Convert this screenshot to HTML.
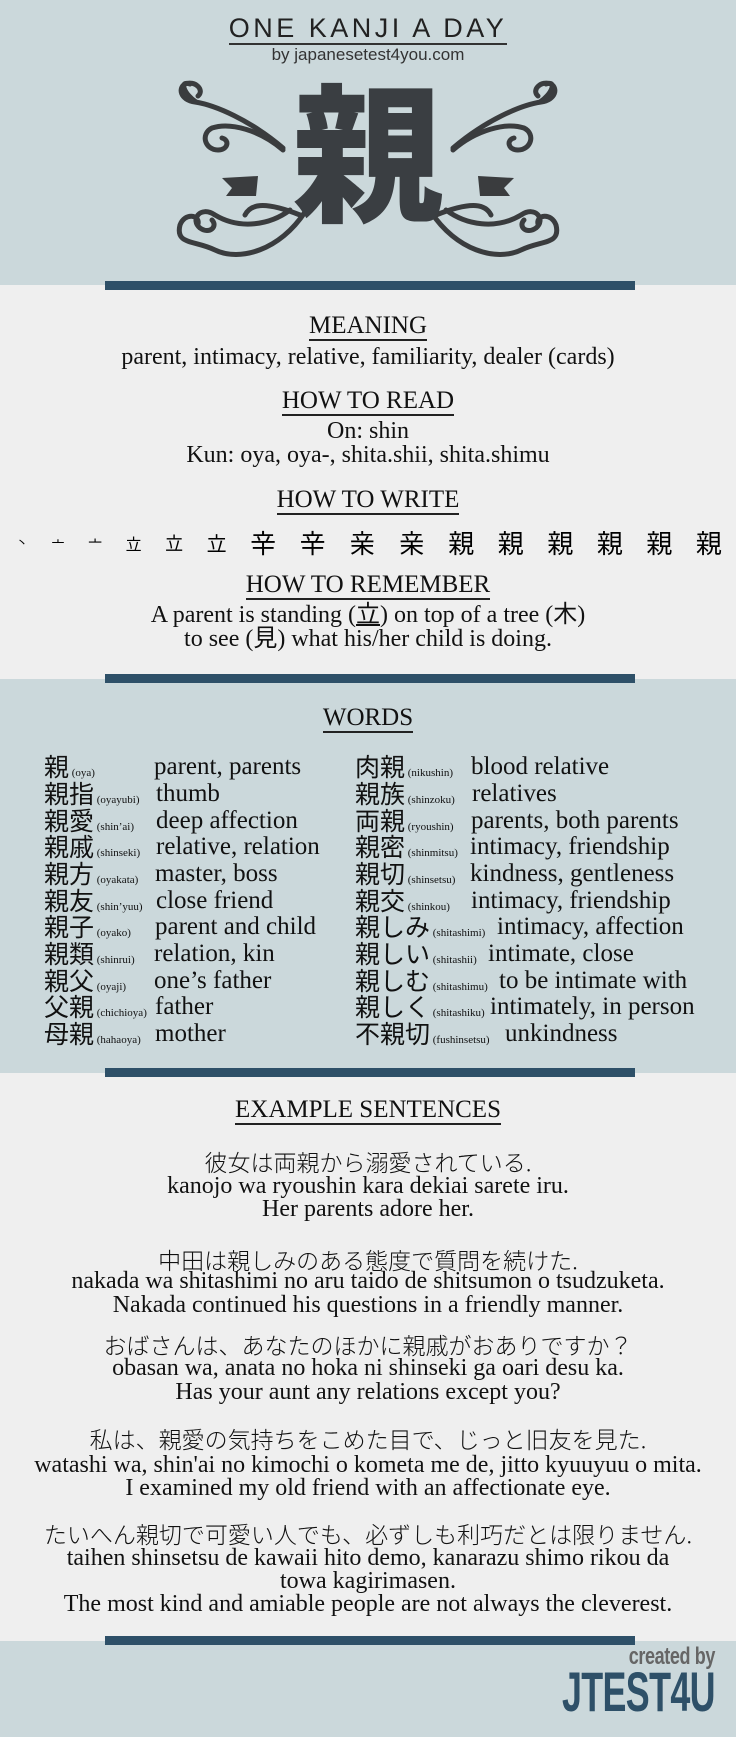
<!DOCTYPE html>
<html><head><meta charset="utf-8"><style>
*{margin:0;padding:0;box-sizing:border-box}
body{width:736px;height:1737px;position:relative;background:#efefef;font-family:"Liberation Serif","Noto Sans CJK JP",serif;color:#111;overflow:hidden}
.band{position:absolute;left:0;width:736px;background:#cbd8db}
.bar{position:absolute;left:105px;width:530px;height:9px;background:#2e5068}
.c{position:absolute;left:0;width:736px;text-align:center;white-space:nowrap}
.h{font-size:25px;line-height:28px}
.h span{border-bottom:2px solid #222}
.t{font-size:24px;line-height:26px}
.jp{font-family:"Noto Sans CJK JP",sans-serif;font-weight:300;font-size:23px;line-height:26px}
.row{position:absolute;font-size:22px;line-height:27px;white-space:nowrap}
.k{font-family:"Noto Sans CJK JP",sans-serif;font-size:25px;font-weight:400}
.r{font-size:11px}
.m{position:absolute;white-space:nowrap;font-size:25px;line-height:27px}
</style></head><body>
<div class="band" style="top:0;height:285px"></div>
<div class="c" style="top:13px;font-family:'Liberation Sans',sans-serif;font-size:27px;letter-spacing:3.5px;color:#222"><span style="border-bottom:2px solid #333">ONE KANJI A DAY</span></div>
<div class="c" style="top:45px;font-family:'Liberation Sans',sans-serif;font-size:17px;color:#333">by japanesetest4you.com</div>
<svg style="position:absolute;left:0;top:0" width="736" height="285" viewBox="0 0 736 285">
<g fill="none" stroke="#3a3c3e" stroke-width="5" stroke-linecap="round">
<g id="L">
<path d="M283 148 C250 120 215 105 195 102 C180 100 178 88 185 84 C195 80 205 90 198 96"/>
<path d="M196 102 C185 95 178 80 190 84"/>
<path d="M283 150 C260 130 230 122 212 128 C200 134 205 150 218 150 C228 150 230 140 222 138"/>
<path d="M290 210 C270 225 240 230 215 215 C200 205 190 220 200 228 C210 235 218 226 212 220"/>
<path d="M305 212 C280 250 240 262 215 250 C195 240 175 245 180 225 C185 212 200 215 198 224"/>
<path d="M300 215 C262 200 250 205 245 215"/>
</g>
<use href="#L" transform="translate(736 0) scale(-1 1)"/>
</g>
<g fill="#3a3c3e">
<path d="M222 178 L258 176 L256 196 L226 196 L232 188 Z"/>
<path d="M514 178 L478 176 L480 196 L510 196 L504 188 Z"/>
</g>
</svg>
<div style="position:absolute;left:0;width:736px;top:66px;text-align:center;font-family:'Noto Sans CJK JP',sans-serif;font-weight:900;font-size:150px;line-height:160px;color:#3a3e42">親</div>
<div class="bar" style="top:281px"></div>

<div class="c h" style="top:312px"><span>MEANING</span></div>
<div class="c t" style="top:344px">parent, intimacy, relative, familiarity, dealer (cards)</div>
<div class="c h" style="top:387px"><span>HOW TO READ</span></div>
<div class="c t" style="top:418px">On: shin</div>
<div class="c t" style="top:442px">Kun: oya, oya-, shita.shii, shita.shimu</div>
<div class="c h" style="top:486px"><span>HOW TO WRITE</span></div>
<div style="position:absolute;top:526px;left:16px;width:706px;display:flex;justify-content:space-between;align-items:flex-end;font-family:'Noto Sans CJK JP',sans-serif;font-size:26px;line-height:34px;color:#000">
<span style="font-size:12px">丶</span><span style="font-size:13px">亠</span><span style="font-size:14px">亠</span><span style="font-size:16px">立</span><span style="font-size:18px">立</span><span style="font-size:20px">立</span><span>辛</span><span>辛</span><span>亲</span><span>亲</span><span>親</span><span>親</span><span>親</span><span>親</span><span>親</span><span>親</span></div>
<div class="c h" style="top:571px"><span>HOW TO REMEMBER</span></div>
<div class="c t" style="top:602px">A parent is standing (<u>立</u>) on top of a tree (木)</div>
<div class="c t" style="top:626px">to see (見) what his/her child is doing.</div>
<div class="band" style="top:679px;height:394px"></div>
<div class="bar" style="top:674px"></div>

<div class="c h" style="top:704px"><span>WORDS</span></div>
<div style="position:absolute;top:753px;left:0;width:736px">
<div class="row" style="left:44px;top:0"><span class="k">親</span><span class="r"> (oya)</span></div><div class="m" style="left:154px;top:0">parent, parents</div>
<div class="row" style="left:44px;top:27px"><span class="k">親指</span><span class="r"> (oyayubi)</span></div><div class="m" style="left:156px;top:27px">thumb</div>
<div class="row" style="left:44px;top:54px"><span class="k">親愛</span><span class="r"> (shin’ai)</span></div><div class="m" style="left:156px;top:54px">deep affection</div>
<div class="row" style="left:44px;top:80px"><span class="k">親戚</span><span class="r"> (shinseki)</span></div><div class="m" style="left:156px;top:80px">relative, relation</div>
<div class="row" style="left:44px;top:107px"><span class="k">親方</span><span class="r"> (oyakata)</span></div><div class="m" style="left:155px;top:107px">master, boss</div>
<div class="row" style="left:44px;top:134px"><span class="k">親友</span><span class="r"> (shin’yuu)</span></div><div class="m" style="left:156px;top:134px">close friend</div>
<div class="row" style="left:44px;top:160px"><span class="k">親子</span><span class="r"> (oyako)</span></div><div class="m" style="left:155px;top:160px">parent and child</div>
<div class="row" style="left:44px;top:187px"><span class="k">親類</span><span class="r"> (shinrui)</span></div><div class="m" style="left:154px;top:187px">relation, kin</div>
<div class="row" style="left:44px;top:214px"><span class="k">親父</span><span class="r"> (oyaji)</span></div><div class="m" style="left:154px;top:214px">one’s father</div>
<div class="row" style="left:44px;top:240px"><span class="k">父親</span><span class="r"> (chichioya)</span></div><div class="m" style="left:155px;top:240px">father</div>
<div class="row" style="left:44px;top:267px"><span class="k">母親</span><span class="r"> (hahaoya)</span></div><div class="m" style="left:155px;top:267px">mother</div>

<div class="row" style="left:355px;top:0"><span class="k">肉親</span><span class="r"> (nikushin)</span></div><div class="m" style="left:471px;top:0">blood relative</div>
<div class="row" style="left:355px;top:27px"><span class="k">親族</span><span class="r"> (shinzoku)</span></div><div class="m" style="left:472px;top:27px">relatives</div>
<div class="row" style="left:355px;top:54px"><span class="k">両親</span><span class="r"> (ryoushin)</span></div><div class="m" style="left:471px;top:54px">parents, both parents</div>
<div class="row" style="left:355px;top:80px"><span class="k">親密</span><span class="r"> (shinmitsu)</span></div><div class="m" style="left:470px;top:80px">intimacy, friendship</div>
<div class="row" style="left:355px;top:107px"><span class="k">親切</span><span class="r"> (shinsetsu)</span></div><div class="m" style="left:470px;top:107px">kindness, gentleness</div>
<div class="row" style="left:355px;top:134px"><span class="k">親交</span><span class="r"> (shinkou)</span></div><div class="m" style="left:471px;top:134px">intimacy, friendship</div>
<div class="row" style="left:355px;top:160px"><span class="k">親しみ</span><span class="r"> (shitashimi)</span></div><div class="m" style="left:497px;top:160px">intimacy, affection</div>
<div class="row" style="left:355px;top:187px"><span class="k">親しい</span><span class="r"> (shitashii)</span></div><div class="m" style="left:488px;top:187px">intimate, close</div>
<div class="row" style="left:355px;top:214px"><span class="k">親しむ</span><span class="r"> (shitashimu)</span></div><div class="m" style="left:499px;top:214px">to be intimate with</div>
<div class="row" style="left:355px;top:240px"><span class="k">親しく</span><span class="r"> (shitashiku)</span></div><div class="m" style="left:490px;top:240px">intimately, in person</div>
<div class="row" style="left:355px;top:267px"><span class="k">不親切</span><span class="r"> (fushinsetsu)</span></div><div class="m" style="left:505px;top:267px">unkindness</div>
</div>
<div class="bar" style="top:1068px"></div>

<div class="c h" style="top:1096px"><span>EXAMPLE SENTENCES</span></div>
<div class="c jp" style="top:1148px">彼女は両親から溺愛されている.</div>
<div class="c t" style="top:1173px">kanojo wa ryoushin kara dekiai sarete iru.</div>
<div class="c t" style="top:1196px">Her parents adore her.</div>
<div class="c jp" style="top:1246px">中田は親しみのある態度で質問を続けた.</div>
<div class="c t" style="top:1268px">nakada wa shitashimi no aru taido de shitsumon o tsudzuketa.</div>
<div class="c t" style="top:1292px">Nakada continued his questions in a friendly manner.</div>
<div class="c jp" style="top:1331px">おばさんは、あなたのほかに親戚がおありですか？</div>
<div class="c t" style="top:1355px">obasan wa, anata no hoka ni shinseki ga oari desu ka.</div>
<div class="c t" style="top:1379px">Has your aunt any relations except you?</div>
<div class="c jp" style="top:1425px">私は、親愛の気持ちをこめた目で、じっと旧友を見た.</div>
<div class="c t" style="top:1452px">watashi wa, shin'ai no kimochi o kometa me de, jitto kyuuyuu o mita.</div>
<div class="c t" style="top:1475px">I examined my old friend with an affectionate eye.</div>
<div class="c jp" style="top:1520px">たいへん親切で可愛い人でも、必ずしも利巧だとは限りません.</div>
<div class="c t" style="top:1545px">taihen shinsetsu de kawaii hito demo, kanarazu shimo rikou da</div>
<div class="c t" style="top:1568px">towa kagirimasen.</div>
<div class="c t" style="top:1591px">The most kind and amiable people are not always the cleverest.</div>

<div class="band" style="top:1641px;height:96px"></div>
<div class="bar" style="top:1636px"></div>
<div style="position:absolute;right:21px;top:1643px;font-family:'Liberation Sans',sans-serif;font-weight:bold;font-size:24px;color:#666;transform:scaleX(0.75);transform-origin:right;letter-spacing:-0.5px">created by</div>
<div style="position:absolute;right:21px;top:1662px;font-family:'Liberation Sans',sans-serif;font-weight:bold;font-size:56px;line-height:60px;color:#2e5068;transform:scaleX(0.64);transform-origin:right;letter-spacing:-1px">JTEST4U</div>
</body></html>
